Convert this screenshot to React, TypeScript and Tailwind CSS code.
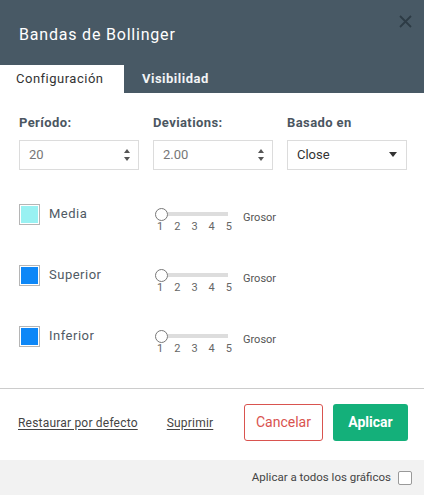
import React from 'react'

const font = { fontFamily: 'Roboto, "Noto Sans", sans-serif' }

function Spinner({ value }: { value: string }) {
    return (
        <div className="flex h-[30px] w-[120px] items-center justify-between border border-[#dcdcdc] bg-white pl-[9px] pr-[8px]">
            <span className="text-[13px] text-[#777]">{value}</span>
            <div className="flex flex-col items-center gap-[4px]">
                <svg width="6" height="4" viewBox="0 0 6 4"><path d="M3 0L6 4H0z" fill="#555" /></svg>
                <svg width="6" height="4" viewBox="0 0 6 4"><path d="M0 0h6L3 4z" fill="#555" /></svg>
            </div>
        </div>
    )
}

function LineRow({ label, color }: { label: string; color: string }) {
    return (
        <div className="flex h-[40px] items-start">
            <div className="flex w-[136px] items-center pt-[4px]">
                <div className="flex h-[21px] w-[21px] items-center justify-center border border-[#b5b5b5] bg-white">
                    <div className="h-[17px] w-[17px]" style={{ backgroundColor: color }} />
                </div>
                <span className="ml-[9px] text-[13px] tracking-[0.5px] text-[#505a64]">{label}</span>
            </div>
            <div className="flex w-[88px] flex-col pt-[8px]">
                <div className="flex items-center">
                    <div className="h-[13px] w-[13px] rounded-full border border-[#777] bg-white" />
                    <div className="h-[4px] w-[60px] bg-[#dddddd]" />
                </div>
                <div className="ml-[2px] flex w-[75px] justify-between text-[11px] leading-[12px] text-[#666]">
                    <span>1</span><span>2</span><span>3</span><span>4</span><span>5</span>
                </div>
            </div>
            <span className="pt-[10px] text-[11px] text-[#555]">Grosor</span>
        </div>
    )
}

export default function App() {
    return (
        <div className="flex h-[495px] w-[424px] flex-col bg-white" style={font}>
            <div className="flex h-[93px] flex-col bg-[#485965]">
                <div className="flex h-[65px] items-start justify-between">
                    <h1 className="pl-[19px] pt-[23px] text-[16px] font-normal tracking-[0.8px] text-white">Bandas de Bollinger</h1>
                    <svg className="mr-[12px] mt-[15px]" width="13" height="13" viewBox="0 0 13 13">
                        <path d="M1 1L12 12M12 1L1 12" stroke="#2d3b45" strokeWidth="1.8" />
                    </svg>
                </div>
                <div className="flex h-[28px] items-stretch">
                    <div className="flex w-[124px] items-center bg-white pl-[16px] text-[13px] tracking-[0.5px] text-[#333]">Configuración</div>
                    <div className="flex items-center pl-[18px] text-[13px] font-bold tracking-[0.5px] text-[#f2f4f5]">Visibilidad</div>
                </div>
            </div>

            <div className="flex flex-col px-[19px] pt-[20px]">
                <div className="flex gap-[14px]">
                    <div className="flex flex-col gap-[7px]">
                        <span className="text-[13px] font-bold tracking-[0.4px] text-[#4b5661]">Período:</span>
                        <Spinner value="20" />
                    </div>
                    <div className="flex flex-col gap-[7px]">
                        <span className="text-[13px] font-bold tracking-[0.4px] text-[#4b5661]">Deviations:</span>
                        <Spinner value="2.00" />
                    </div>
                    <div className="flex flex-col gap-[7px]">
                        <span className="text-[13px] font-bold tracking-[0.4px] text-[#4b5661]">Basado en</span>
                        <div className="flex h-[30px] w-[120px] items-center justify-between border border-[#dcdcdc] bg-white pl-[9px] pr-[9px]">
                            <span className="text-[13px] text-[#333]">Close</span>
                            <svg width="8" height="5" viewBox="0 0 8 5"><path d="M0 0h8L4 5z" fill="#333" /></svg>
                        </div>
                    </div>
                </div>

                <div className="mt-[30px] flex flex-col gap-[21px]">
                    <LineRow label="Media" color="#99f1f2" />
                    <LineRow label="Superior" color="#0d87f7" />
                    <LineRow label="Inferior" color="#0d87f7" />
                </div>
            </div>

            <div className="mt-auto border-t border-[#cccccc]">
                <div className="flex items-center px-[16px] pb-[19px] pt-[15px]">
                    <a className="ml-[2px] text-[12px] tracking-[0.2px] text-[#444] underline underline-offset-2">Restaurar por defecto</a>
                    <a className="ml-[29px] text-[12px] tracking-[0.2px] text-[#444] underline underline-offset-2">Suprimir</a>
                    <button className="ml-auto h-[37px] w-[79px] rounded-[3px] border border-[#d9534f] bg-white text-[14px] text-[#d9534f]">Cancelar</button>
                    <button className="ml-[10px] h-[37px] w-[75px] rounded-[3px] bg-[#14b07a] text-[14px] font-bold text-white">Aplicar</button>
                </div>
                <div className="flex h-[35px] items-center justify-end bg-[#f2f2f2] pr-[12px]">
                    <span className="text-[11.5px] text-[#444]">Aplicar a todos los gráficos</span>
                    <div className="ml-[7px] h-[14px] w-[14px] rounded-[2px] border border-[#999] bg-white" />
                </div>
            </div>
        </div>
    )
}
